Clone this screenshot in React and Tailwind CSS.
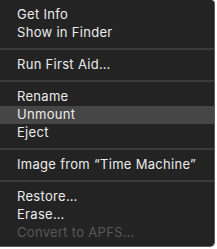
const ITEMS = [
  { label: "Get Info" },
  { label: "Show in Finder" },
  { sep: true },
  { label: "Run First Aid…" },
  { sep: true },
  { label: "Rename" },
  { label: "Unmount", active: true },
  { label: "Eject" },
  { sep: true },
  { label: "Image from “Time Machine”" },
  { sep: true },
  { label: "Restore…" },
  { label: "Erase…" },
  { label: "Convert to APFS…", disabled: true },
];

export default function App() {
  return (
    <div className="w-[217px] h-[249px] bg-white overflow-hidden">
      <div
        className="w-[215px] h-[247px] bg-[#232323] border-r border-b border-[#5c5c5c] rounded-br-[5px] rounded-tr-[4px] pt-[6px] text-[13px] tracking-[0.3px]"
        style={{ fontFamily: "Inter, 'Liberation Sans', sans-serif" }}
      >
        {ITEMS.map((it, i) =>
          it.sep ? (
            <div key={i} className="h-[14px] flex items-center">
              <div className="w-full h-[2px] bg-[#3a3a3a]" />
            </div>
          ) : (
            <div
              key={i}
              className={
                "h-[18px] flex items-center pl-[17px] " +
                (it.active ? "bg-[#464646] " : "") +
                (it.disabled ? "text-[#585858]" : "text-[#ececec]")
              }
            >
              {it.label}
            </div>
          )
        )}
      </div>
    </div>
  );
}
